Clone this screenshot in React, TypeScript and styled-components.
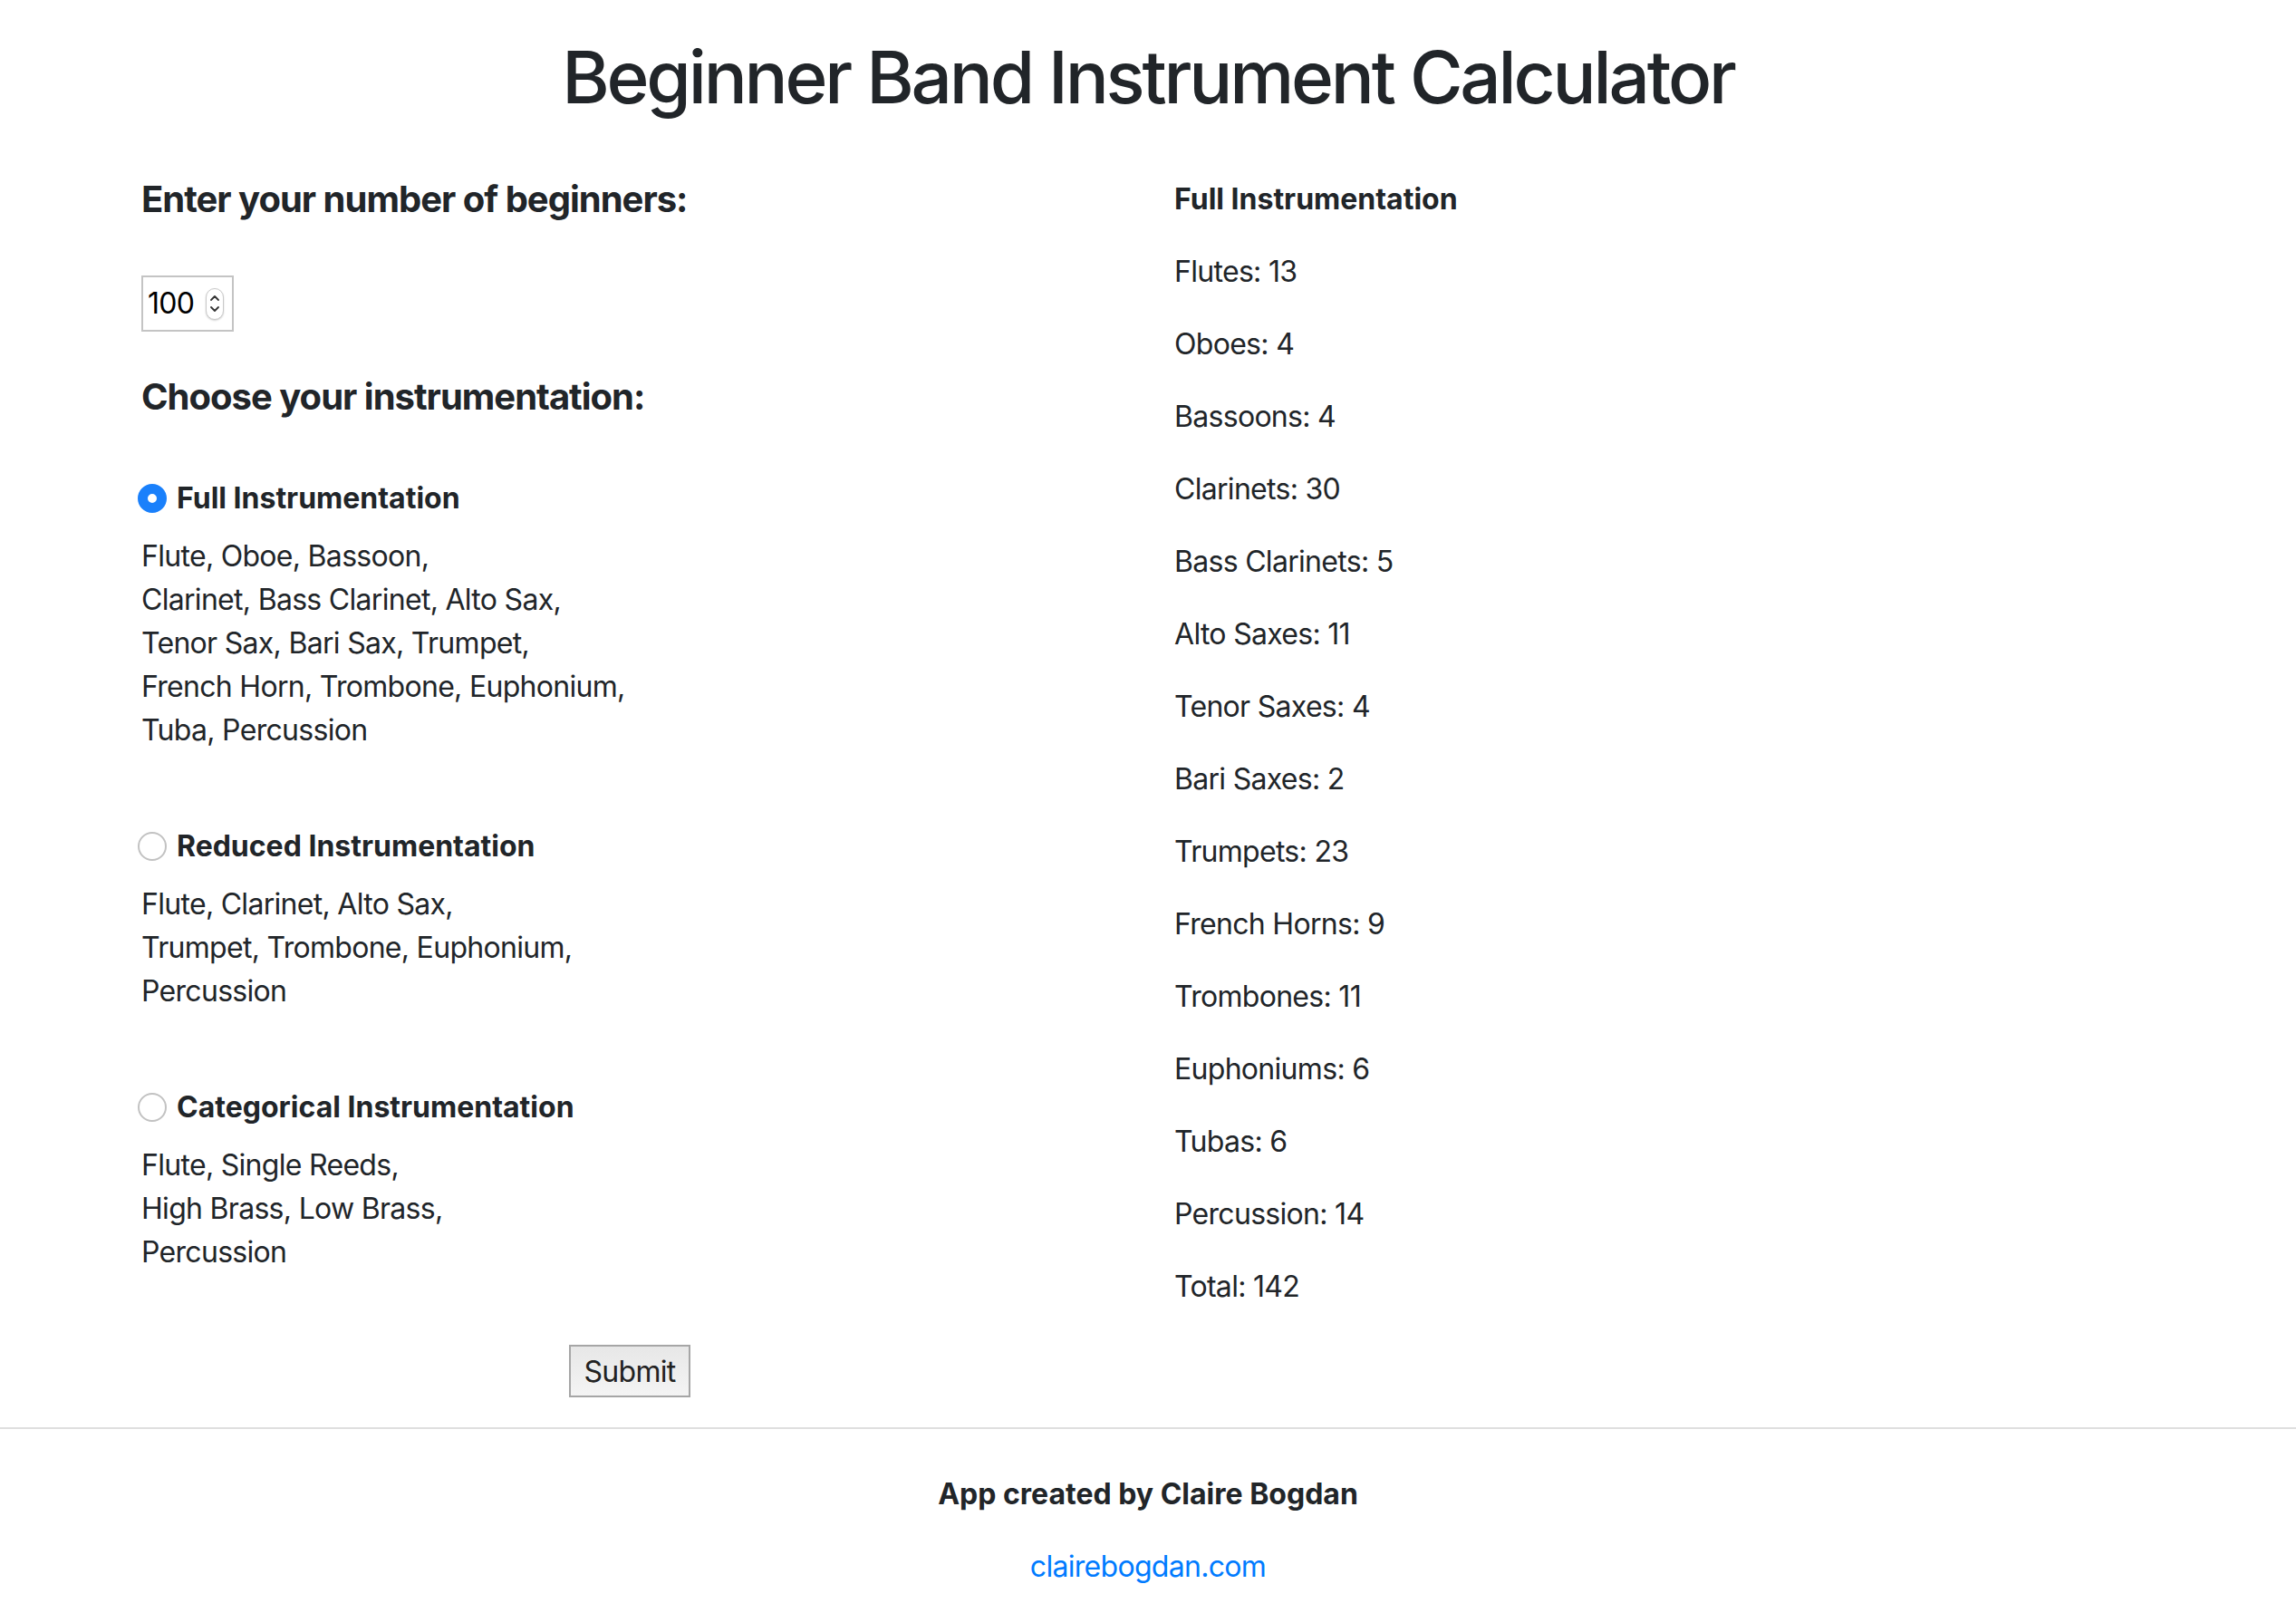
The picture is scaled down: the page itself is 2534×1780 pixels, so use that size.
import React, { useState } from "react";
import styled, { createGlobalStyle } from "styled-components";

const GlobalStyle = createGlobalStyle`
  html, body {
    margin: 0;
    padding: 0;
    background: #ffffff;
  }
  body {
    font-family: Inter, "Noto Sans", "Liberation Sans", sans-serif;
    font-size: 32px;
    line-height: 48px;
    letter-spacing: -0.7px;
    color: #212529;
  }
  * { box-sizing: border-box; }
`;

const Page = styled.div`
  display: flex;
  flex-direction: column;
  width: 100%;
`;

const Title = styled.h1`
  margin: 37px 0 63px;
  font-size: 80px;
  line-height: 96px;
  font-weight: 500;
  letter-spacing: -3.2px;
  text-align: center;
  color: #212529;
`;

const Container = styled.div`
  width: 2280px;
  margin: 0 auto;
  display: grid;
  grid-template-columns: 1fr 1fr;
`;

const Column = styled.div`
  padding: 0 29px;
  display: flex;
  flex-direction: column;
`;

const SectionHeading = styled.h5<{ $after: number }>`
  margin: 0 0 ${(p) => p.$after}px;
  font-size: 40px;
  line-height: 48px;
  font-weight: 700;
  letter-spacing: -1px;
`;

const NumberBox = styled.div`
  display: flex;
  align-items: center;
  width: 102px;
  height: 62px;
  border: 2px solid #c4c4c4;
  padding: 0 9px 0 5px;
  margin-bottom: 48px;
  background: #fff;
`;

const NumberInput = styled.input`
  width: 60px;
  border: none;
  outline: none;
  padding: 0;
  font-family: inherit;
  font-size: 32px;
  line-height: 48px;
  letter-spacing: -0.7px;
  color: #000;
  background: transparent;
`;

const Spinner = styled.div`
  display: flex;
  align-items: center;
  justify-content: center;
  width: 20px;
  height: 35px;
  margin-left: auto;
  border: 1px solid #c9c9c9;
  border-radius: 10px;
  box-shadow: 0 1px 2px rgba(0, 0, 0, 0.18);
  background: #fff;
`;

const Option = styled.div`
  display: flex;
  flex-direction: column;
  margin-bottom: 80px;
`;

const OptionLabel = styled.label`
  display: flex;
  align-items: center;
  gap: 11px;
  height: 48px;
  font-weight: 700;
  letter-spacing: 0;
  cursor: pointer;
`;

const Radio = styled.input.attrs({ type: "radio" })`
  appearance: none;
  -webkit-appearance: none;
  margin: 0 0 0 -4px;
  width: 32px;
  height: 32px;
  border-radius: 50%;
  border: 2px solid #c2c2c2;
  background: #fff;
  flex-shrink: 0;
  &:checked {
    border: 11px solid #1a80fb;
  }
`;

const Description = styled.p`
  margin: 16px 0 0;
  font-weight: 400;
`;

const ButtonRow = styled.div`
  display: flex;
  justify-content: center;
  margin-top: -2px;
`;

const SubmitButton = styled.button`
  width: 134px;
  height: 58px;
  margin-left: -4px;
  border: 2px solid #a6a6a6;
  background: linear-gradient(#e7e7e7, #f4f4f4);
  font-family: inherit;
  font-size: 32px;
  letter-spacing: -0.7px;
  color: #222;
  padding: 0;
  cursor: pointer;
`;

const ResultHeading = styled.p`
  margin: 0 0 32px;
  font-weight: 700;
  letter-spacing: 0;
`;

const ResultItem = styled.p`
  margin: 0 0 32px;
`;

const Rule = styled.hr`
  width: 100%;
  margin: 33px 0 0;
  border: none;
  border-top: 2px solid #dfdfdf;
`;

const Footer = styled.footer`
  display: flex;
  flex-direction: column;
  align-items: center;
  padding: 48px 0 30px;
`;

const Credit = styled.p`
  margin: 0 0 32px;
  font-weight: 700;
  letter-spacing: 0;
`;

const SiteLink = styled.a`
  color: #007bff;
  text-decoration: none;
`;

const options = [
  {
    id: "full",
    label: "Full Instrumentation",
    lines: [
      "Flute, Oboe, Bassoon,",
      "Clarinet, Bass Clarinet, Alto Sax,",
      "Tenor Sax, Bari Sax, Trumpet,",
      "French Horn, Trombone, Euphonium,",
      "Tuba, Percussion",
    ],
  },
  {
    id: "reduced",
    label: "Reduced Instrumentation",
    lines: ["Flute, Clarinet, Alto Sax,", "Trumpet, Trombone, Euphonium,", "Percussion"],
  },
  {
    id: "categorical",
    label: "Categorical Instrumentation",
    lines: ["Flute, Single Reeds,", "High Brass, Low Brass,", "Percussion"],
  },
];

const results: [string, number][] = [
  ["Flutes", 13],
  ["Oboes", 4],
  ["Bassoons", 4],
  ["Clarinets", 30],
  ["Bass Clarinets", 5],
  ["Alto Saxes", 11],
  ["Tenor Saxes", 4],
  ["Bari Saxes", 2],
  ["Trumpets", 23],
  ["French Horns", 9],
  ["Trombones", 11],
  ["Euphoniums", 6],
  ["Tubas", 6],
  ["Percussion", 14],
];

export default function App() {
  const [count, setCount] = useState("100");
  const [choice, setChoice] = useState("full");
  const total = results.reduce((s, [, n]) => s + n, 0);

  return (
    <Page>
      <GlobalStyle />
      <Title>Beginner Band Instrument Calculator</Title>
      <Container>
        <Column>
          <SectionHeading $after={60}>Enter your number of beginners:</SectionHeading>
          <NumberBox>
            <NumberInput value={count} onChange={(e) => setCount(e.target.value)} />
            <Spinner>
              <svg width="12" height="24" viewBox="0 0 12 24" fill="none">
                <path d="M2 8 L6 4 L10 8" stroke="#333" strokeWidth="1.8" strokeLinecap="round" strokeLinejoin="round" />
                <path d="M2 16 L6 20 L10 16" stroke="#333" strokeWidth="1.8" strokeLinecap="round" strokeLinejoin="round" />
              </svg>
            </Spinner>
          </NumberBox>
          <SectionHeading $after={64}>Choose your instrumentation:</SectionHeading>
          {options.map((o) => (
            <Option key={o.id}>
              <OptionLabel>
                <Radio name="inst" checked={choice === o.id} onChange={() => setChoice(o.id)} />
                {o.label}
              </OptionLabel>
              <Description>
                {o.lines.map((l, i) => (
                  <React.Fragment key={i}>
                    {l}
                    {i < o.lines.length - 1 && <br />}
                  </React.Fragment>
                ))}
              </Description>
            </Option>
          ))}
          <ButtonRow>
            <SubmitButton type="button">Submit</SubmitButton>
          </ButtonRow>
        </Column>
        <Column>
          <ResultHeading>Full Instrumentation</ResultHeading>
          {results.map(([name, n]) => (
            <ResultItem key={name}>
              {name}: {n}
            </ResultItem>
          ))}
          <ResultItem>Total: {total}</ResultItem>
        </Column>
      </Container>
      <Rule />
      <Footer>
        <Credit>App created by Claire Bogdan</Credit>
        <SiteLink href="#">clairebogdan.com</SiteLink>
      </Footer>
    </Page>
  );
}
